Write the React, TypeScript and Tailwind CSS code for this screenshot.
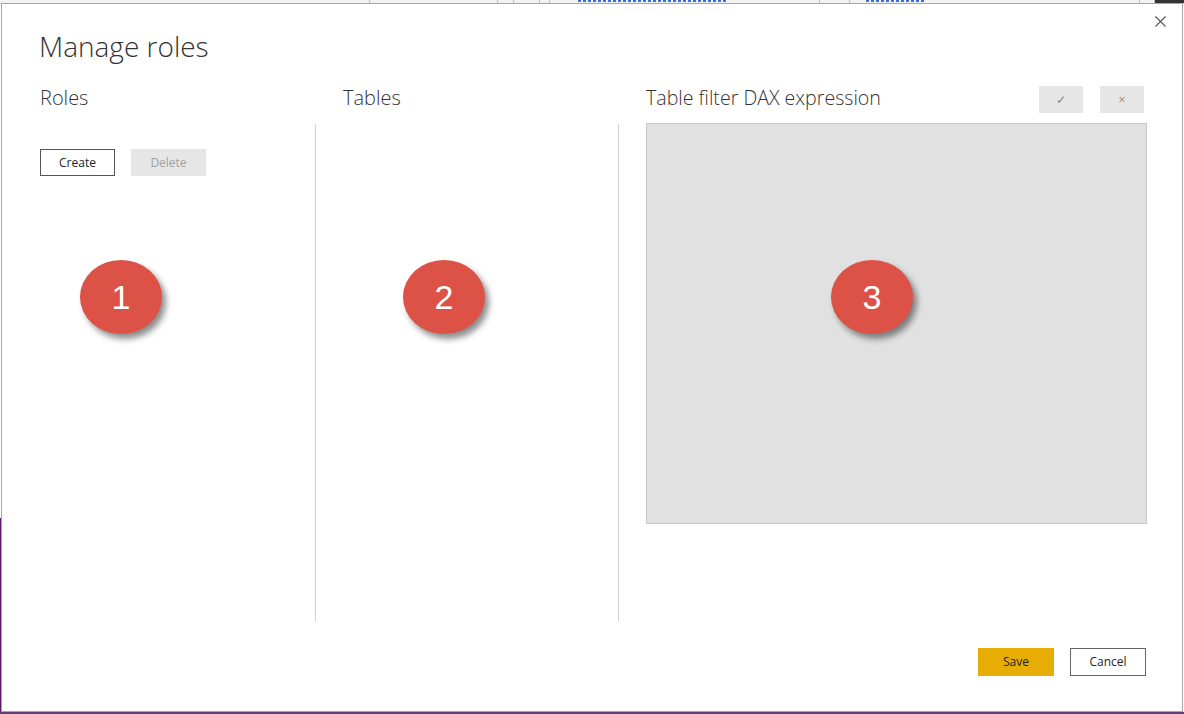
import { X } from "lucide-react";

const font = { fontFamily: '"Open Sans", "Noto Sans", sans-serif' };

function Badge({ n }: { n: string }) {
  return (
    <div className="flex h-[74px] w-[82px] items-center justify-center rounded-[50%] bg-[#dc5246] text-[34px] text-white shadow-[4px_5px_6px_rgba(0,0,0,0.45)] font-['Liberation_Sans',sans-serif]">
      {n}
    </div>
  );
}

function GhostButton({ children }: { children: React.ReactNode }) {
  return (
    <div className="flex h-[27px] w-[44px] items-center justify-center bg-[#e6e6e6] text-[12px] text-[#888]">
      {children}
    </div>
  );
}

export default function App() {
  return (
    <div className="relative h-[714px] w-[1184px] overflow-hidden bg-white" style={font}>
      {/* Background report peeking out behind the dialog */}
      <div className="flex h-[4px] border-b border-[#cfcfcf] bg-[#f3f3f3]">
        <div className="w-[370px] border-r border-[#bdbdbd]" />
        <div className="w-[128px] border-r border-[#bdbdbd]" />
        <div className="w-[16px] border-r border-[#bdbdbd]" />
        <div className="w-[26px] border-r border-[#bdbdbd]" />
        <div className="w-[10px] border-r border-[#bdbdbd]" />
        <div className="w-[270px] border-r border-[#bdbdbd]">
          <div className="ml-[28px] mt-[-2px] h-[4px] w-[150px] bg-[repeating-linear-gradient(90deg,#3b6fe0_0_3px,transparent_3px_5px)]" />
        </div>
        <div className="w-[30px] border-r border-[#bdbdbd]" />
        <div className="w-[290px] border-r border-[#bdbdbd]">
          <div className="ml-[16px] mt-[-2px] h-[4px] w-[60px] bg-[repeating-linear-gradient(90deg,#3b6fe0_0_3px,transparent_3px_5px)]" />
        </div>
        <div className="w-[15px] border-r border-[#bdbdbd]" />
        <div className="flex-1 bg-[#333]" />
      </div>
      <div className="absolute bottom-0 left-0 top-[518px] w-[2px] bg-[#5a1a6e]" />
      <div className="absolute bottom-0 left-0 right-0 h-[2px] bg-[#6b3d78]" />

      {/* Dialog */}
      <div className="absolute left-[1px] top-[3px] flex h-[709px] w-[1182px] flex-col border border-[#a6a6a6] bg-white">
        <button className="absolute right-[12px] top-[8px] text-[#555]">
          <X size={19} strokeWidth={1.4} />
        </button>

        <h1 className="ml-[37px] mt-[22px] text-[28px] font-light leading-[40px] text-[#333]">
          Manage roles
        </h1>

        <div className="mt-[16px] grid grid-cols-[314px_303px_1fr] grid-rows-[42px_497px]">
          {/* Headings */}
          <div className="pl-[38px] text-[20px] font-light leading-[32px] text-[#333]">Roles</div>
          <div className="pl-[27px] text-[20px] font-light leading-[32px] text-[#333]">Tables</div>
          <div className="flex items-start justify-between pl-[27px] pr-[38px]">
            <div className="text-[19.6px] font-light leading-[32px] text-[#333]">Table filter DAX expression</div>
            <div className="mt-[4px] flex gap-[17px]">
              <GhostButton>✓</GhostButton>
              <GhostButton>×</GhostButton>
            </div>
          </div>

          {/* Roles */}
          <div className="flex flex-col border-r border-[#d0d0d0] pl-[38px]">
            <div className="mt-[25px] flex gap-[16px]">
              <button className="h-[27px] w-[75px] border border-[#555] text-[12px] text-[#222]">Create</button>
              <button className="h-[27px] w-[75px] bg-[#e6e6e6] text-[12px] text-[#a0a0a0]">Delete</button>
            </div>
            <div className="ml-[40px] mt-[84px]">
              <Badge n="1" />
            </div>
          </div>

          {/* Tables */}
          <div className="flex flex-col border-r border-[#d0d0d0] pl-[87px]">
            <div className="mt-[136px]">
              <Badge n="2" />
            </div>
          </div>

          {/* DAX expression */}
          <div className="flex flex-col pl-[27px] pr-[35px]">
            <div className="mt-[-1px] h-[401px] border border-[#c8c8c8] bg-[#e1e1e1] pl-[184px] pt-[136px]">
              <Badge n="3" />
            </div>
          </div>
        </div>

        <div className="mr-[36px] mt-[27px] flex justify-end gap-[16px]">
          <button className="h-[28px] w-[76px] bg-[#e8ad05] text-[12px] text-[#222]">Save</button>
          <button className="h-[28px] w-[76px] border border-[#666] text-[12px] text-[#222]">Cancel</button>
        </div>
      </div>
    </div>
  );
}
